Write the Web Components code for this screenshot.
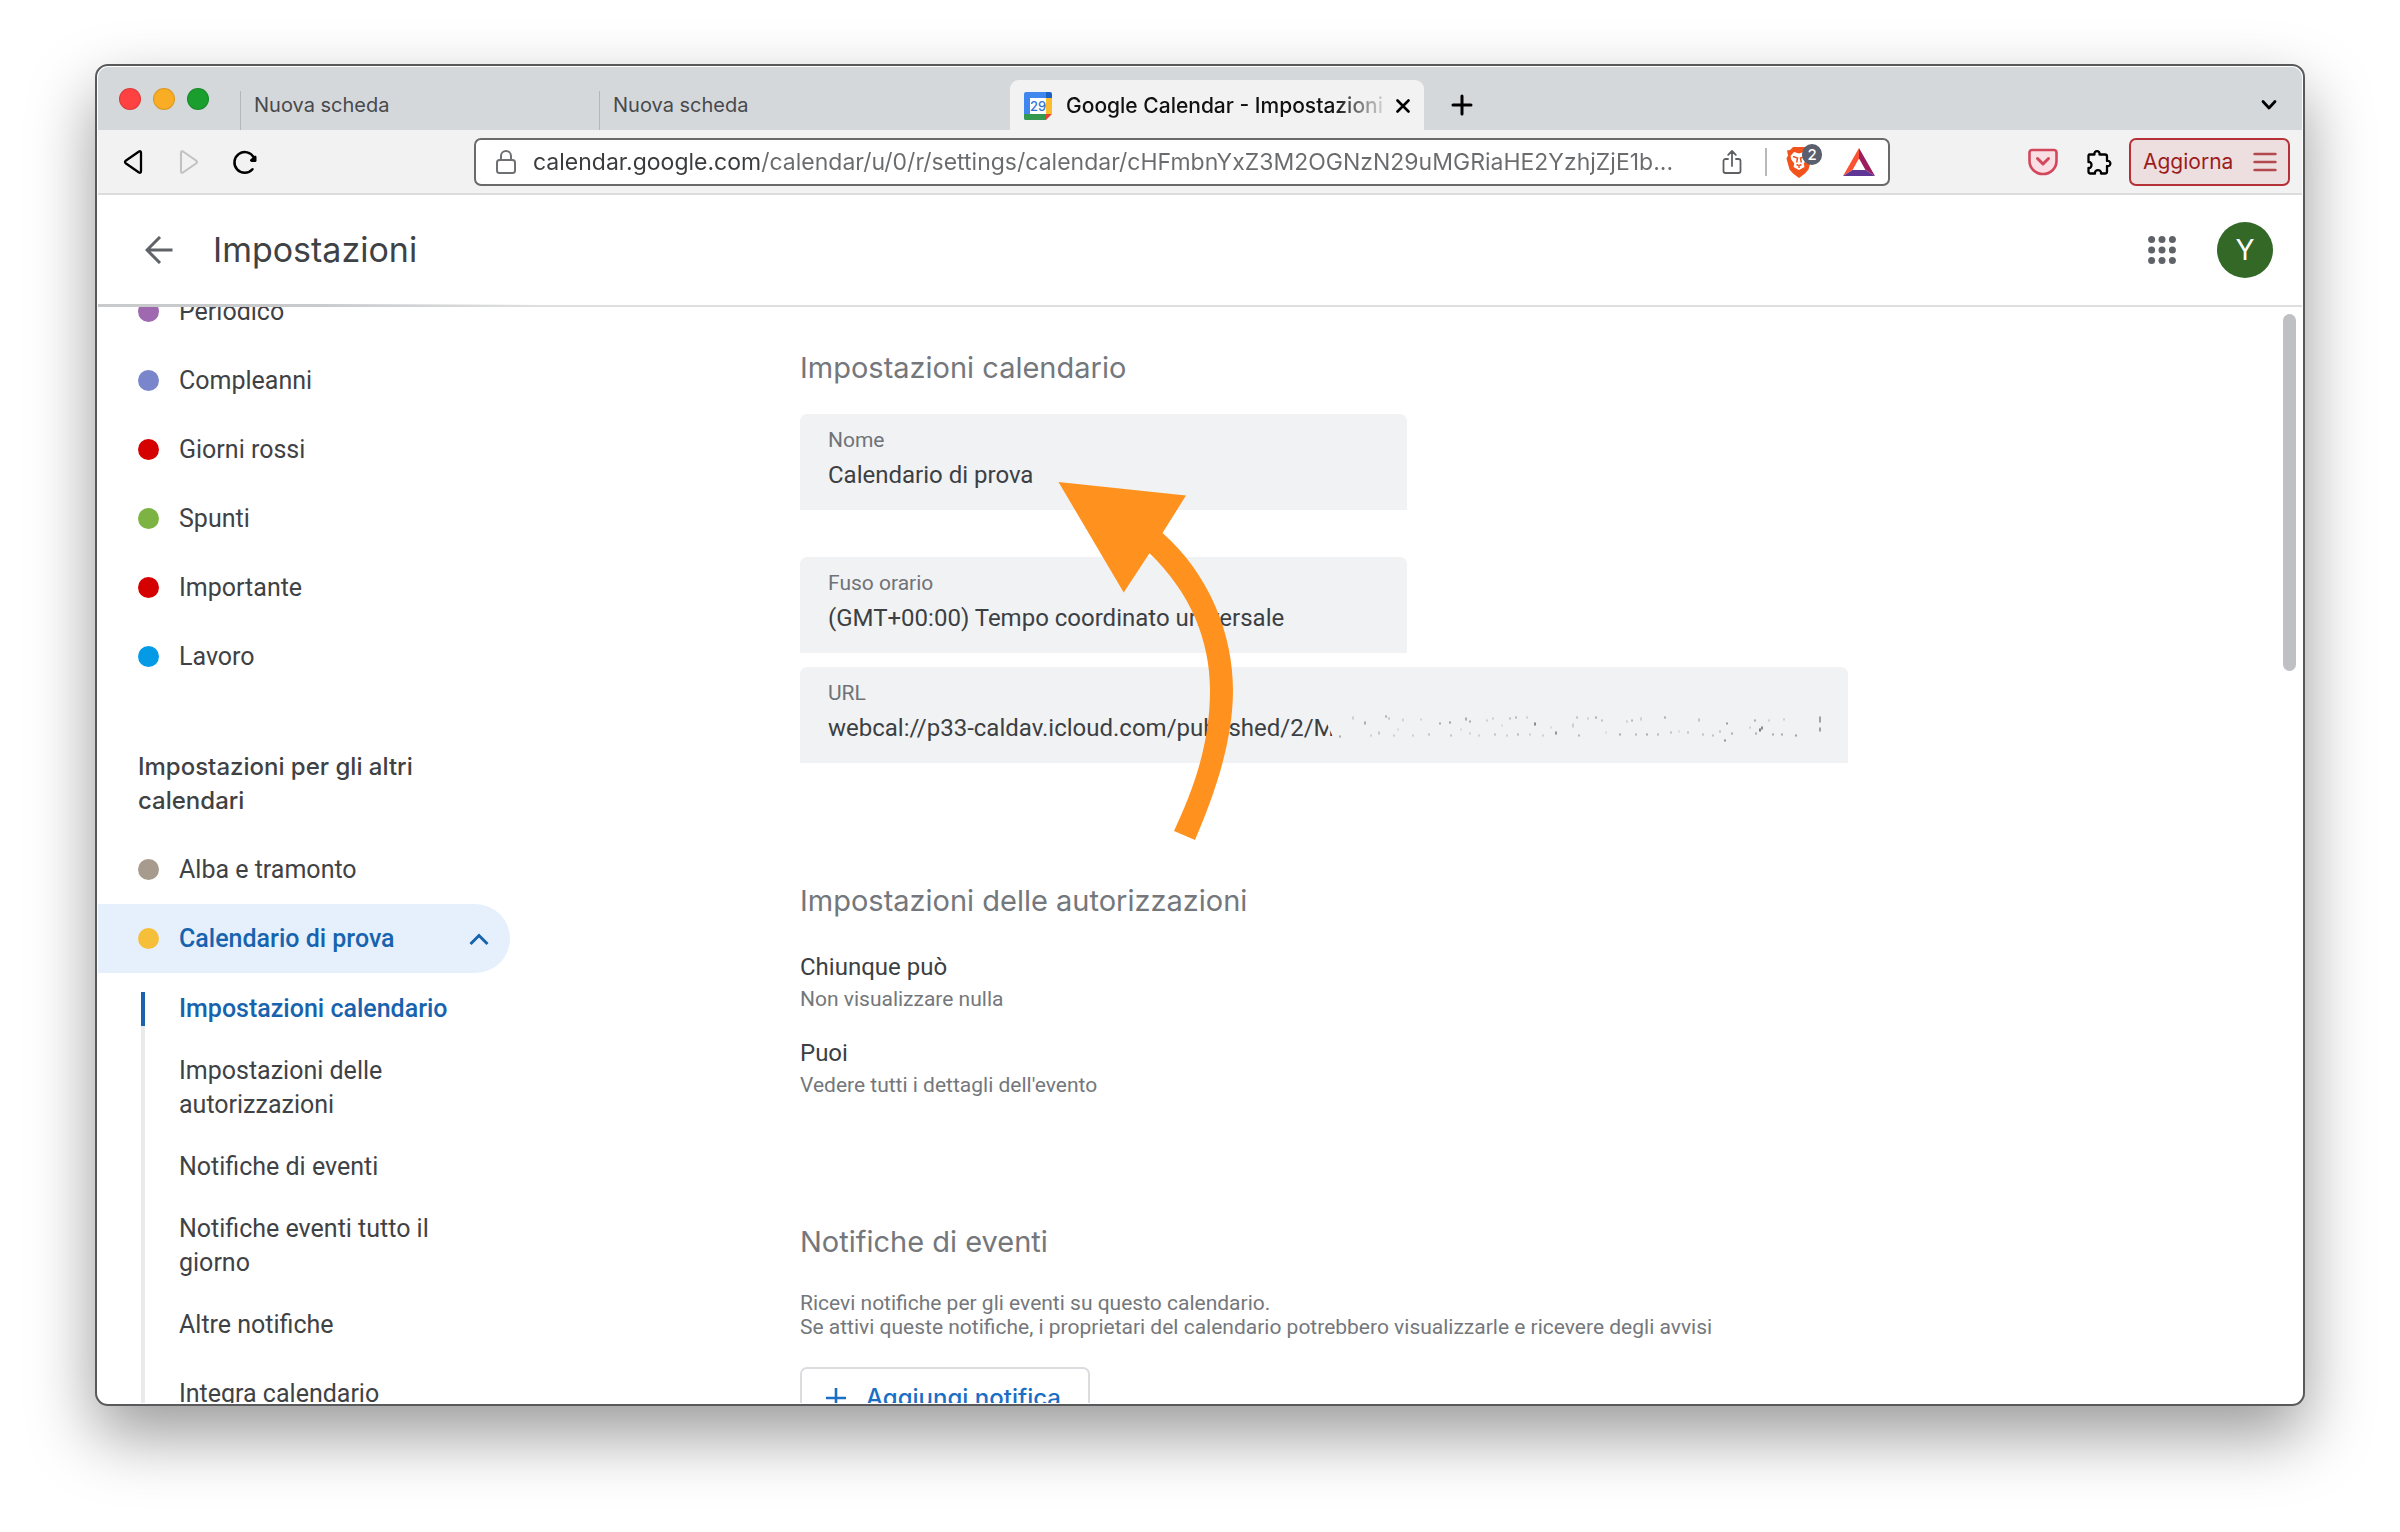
<!DOCTYPE html>
<html lang="it">
<head>
<meta charset="utf-8">
<title>Google Calendar - Impostazioni</title>
<style>
  body { margin: 0; background: #fff; font-family: Roboto, "Liberation Sans", sans-serif; color: #3c4043; }
</style>
</head>
<body>
<calendar-screen></calendar-screen>
<script>
const define = (name, html, setup) => {
  const template = document.createElement('template');
  template.innerHTML = '<style>*{box-sizing:border-box}button{font:inherit;color:inherit;background:none;border:0;padding:0;margin:0}a{color:inherit;text-decoration:none}svg{display:block;flex:none}</style>' + html;
  customElements.define(name, class extends HTMLElement {
    constructor() {
      super();
      this.attachShadow({ mode: 'open' }).append(template.content.cloneNode(true));
    }
    connectedCallback() { if (setup) setup(this, this.shadowRoot); }
  });
};

define('browser-tab', `
<style>
  :host { display: flex; flex: 0 1 359px; min-width: 0; height: 50px; align-items: center; font: 400 20px/28px Inter, sans-serif; color: #47494c; }
  .rule { width: 1px; height: 39px; align-self: flex-end; background: #b4b7ba; margin-right: 13px; }
  button { overflow: hidden; white-space: nowrap; }
</style>
<span class="rule"></span><button type="button"><slot></slot></button>`);

define('active-tab', `
<style>
  :host { display: flex; flex: 0 1 414px; min-width: 0; height: 50px; align-items: center; padding: 2px 14px 0; gap: 14px; background: #f2f2f2; border-radius: 9px 9px 0 0; font: 500 21px/28px Inter, sans-serif; color: #111; }
  .title { flex: 1; min-width: 0; overflow: hidden; white-space: nowrap; text-align: left; -webkit-mask-image: linear-gradient(to right, #000 85%, rgba(0,0,0,.15)); mask-image: linear-gradient(to right, #000 85%, rgba(0,0,0,.15)); }
</style>
<svg width="28" height="28" viewBox="0 0 28 28">
  <path d="M2 0h20v6H6v22H2a2 2 0 0 1-2-2V2a2 2 0 0 1 2-2z" fill="#3f86ee"/>
  <path d="M22 0h4a2 2 0 0 1 2 2v4h-6z" fill="#1b62c4"/>
  <path d="M22 6h6v16h-6z" fill="#fbbc2c"/>
  <path d="M0 22h22v6H2a2 2 0 0 1-2-2z" fill="#34984e"/>
  <path d="M22 22h6l-6 6z" fill="#e5432f"/>
  <path d="M6 6h16v16H6z" fill="#fff"/>
  <text x="14" y="19" text-anchor="middle" font-family="Inter, sans-serif" font-size="13" font-weight="500" fill="#2f75d6">29</text>
</svg>
<button class="title" type="button"><slot></slot></button>
<button type="button" aria-label="Chiudi scheda"><svg width="14" height="14" viewBox="0 0 14 14" fill="none" stroke="#000" stroke-width="2.6" stroke-linecap="round"><path d="M1.5 1.5l11 11M12.5 1.5l-11 11"/></svg></button>`);

define('tab-strip', `
<style>
  :host { display: flex; height: 63px; align-items: flex-end; background: #d5d8db; }
  .lights { display: flex; gap: 13px; padding: 0 32px 0 21px; align-self: center; }
  .lights i { width: 22px; height: 22px; border-radius: 50%; border: 1px solid rgba(0,0,0,.12); margin-right: -1px; }
  button { height: 50px; display: flex; align-items: center; }
  .plus { padding: 0 27px; }
  .more { margin-left: auto; padding-right: 25px; }
</style>
<span class="lights"><i style="background:#fe4141"></i><i style="background:#f9ad24"></i><i style="background:#1a9e2e"></i></span>
<browser-tab>Nuova scheda</browser-tab>
<browser-tab style="flex-basis:411px">Nuova scheda</browser-tab>
<active-tab>Google Calendar - Impostazioni</active-tab>
<button class="plus" type="button" aria-label="Nuova scheda"><svg width="22" height="22" viewBox="0 0 22 22" stroke="#000" stroke-width="3" stroke-linecap="round"><path d="M11 2v18M2 11h18"/></svg></button>
<button class="more" type="button" aria-label="Cerca schede"><svg width="16" height="12" viewBox="0 0 16 12" fill="none" stroke="#000" stroke-width="2.8" stroke-linecap="round" stroke-linejoin="round"><path d="M2 2.5l6 6.5 6-6.5"/></svg></button>`);

define('address-bar', `
<style>
  :host { display: flex; flex: 1; min-width: 0; height: 48px; align-items: center; border: 2px solid #6a6a6c; border-radius: 7px; background: #fff; padding: 0 13px 0 19px; }
  input { flex: 1; min-width: 0; margin: 0 8px 0 16px; padding: 0; border: 0; outline: 0; height: 40px; font: 400 23px/40px Inter, sans-serif; color: #6a6b6d;
    background: linear-gradient(to right, #3a3b3d 229px, #6a6b6d 229px); -webkit-background-clip: text; background-clip: text; -webkit-text-fill-color: transparent; text-overflow: ellipsis; }
  .rule { width: 2px; height: 28px; background: #b9b9bc; margin: 0 18px 0 23px; }
  .shield { position: relative; margin-right: 30px; }
  .badge { position: absolute; left: 17px; top: -2px; width: 20px; height: 21px; border-radius: 10px; background: #5b5e6d; color: #fff; font: 500 15px/21px Inter, sans-serif; text-align: center; }
</style>
<svg width="22" height="24" viewBox="0 0 22 24" fill="none" stroke="#6e7073" stroke-width="2"><rect x="2" y="10" width="18" height="13" rx="2.5"/><path d="M6 10V6a5 5 0 0 1 10 0v4"/></svg>
<input type="text" aria-label="Indirizzo" value="calendar.google.com/calendar/u/0/r/settings/calendar/cHFmbnYxZ3M2OGNzN29uMGRiaHE2YzhjZjE1b...">
<button type="button" aria-label="Condividi"><svg width="20" height="26" viewBox="0 0 20 26" fill="none" stroke="#5f6063" stroke-width="1.8" stroke-linecap="round" stroke-linejoin="round"><path d="M6 10H3.500a2 2 0 0 0-2 2v10a2 2 0 0 0 2 2h13a2 2 0 0 0 2-2V12a2 2 0 0 0-2-2H14M10 17V2M6.200 5.800L10 2l3.800 3.800"/></svg></button>
<span class="rule"></span>
<button class="shield" type="button" aria-label="Brave Shields">
  <svg width="28" height="32" viewBox="0 0 28 32"><path d="M8 1h12l3 3 3 .5-1 5 1.500 3-3 11-3.500 4L14 32l-6-4.500-3.500-4-3-11L3 9.500 2 4.500 5 4z" fill="#f2531d"/><path d="M14 7.500l5-1.500 3.500 4-.8 3.500-3 4 .8 3.500L14 24l-5.500-3 .8-3.500-3-4L5.500 10 9 6z" fill="#fff"/><path d="M8 10.500l4.500 1.500-.8 4.500M20 10.500l-4.500 1.500.8 4.500M11.500 18.500l2.500 1.200 2.500-1.200M14 19.500V22" stroke="#f2531d" stroke-width="1.500" fill="none"/></svg>
  <span class="badge">2</span>
</button>
<svg width="32" height="28" viewBox="0 0 32 28"><path d="M16 0L0 28l9.500-6L16 10.500z" fill="#fb5231"/><path d="M16 0l16 28-9.500-6L16 10.500z" fill="#9b1f5e"/><path d="M0 28h32l-9.500-6h-13z" fill="#5f3596"/></svg>`);

define('browser-toolbar', `
<style>
  :host { display: flex; height: 65px; align-items: center; padding: 0 12px 0 7px; background: #f2f2f2; border-bottom: 2px solid #dcdcdd; }
  .tool { width: 56px; height: 48px; flex: none; display: flex; align-items: center; justify-content: center; }
  address-bar { margin: 0 125px 0 201px; }
  .update { display: flex; align-items: center; justify-content: space-between; width: 161px; height: 48px; margin-left: 2px; padding: 0 11px 0 12px; border: 2px solid #b53137; border-radius: 7px; background: #eddfe0; color: #9d1c20; font: 400 21px/28px Inter, sans-serif; }
</style>
<button class="tool" type="button" aria-label="Indietro"><svg width="20" height="26" viewBox="0 0 20 26" fill="none" stroke="#000" stroke-width="2.3" stroke-linejoin="round"><path d="M16 2.500Q18 1.500 18 4v18q0 2.500-2 1.500L3 14.500q-2-1.500 0-3z"/></svg></button>
<button class="tool" type="button" aria-label="Avanti"><svg width="20" height="26" viewBox="0 0 20 26" fill="none" stroke="#c2c2c4" stroke-width="2.100" stroke-linejoin="round"><path d="M4 2.500Q2 1.500 2 4v18q0 2.500 2 1.500l13-9q2-1.500 0-3z"/></svg></button>
<button class="tool" type="button" aria-label="Ricarica"><svg width="26" height="26" viewBox="0 0 26 26" fill="none"><path d="M20.500 20.200A10.300 10.300 0 1 1 21.800 8.500" stroke="#000" stroke-width="2.500" stroke-linecap="round"/><path d="M23 6.500a1.500 1.500 0 0 1 1.500 1.500v3.500a1.500 1.500 0 0 1-1.500 1.500h-3.500q-2.500-.8-1-2.700z" fill="#000"/></svg></button>
<address-bar></address-bar>
<button class="tool" type="button" aria-label="Pocket"><svg width="30" height="28" viewBox="0 0 30 28" fill="#f9dfe3" stroke="#d3475c" stroke-width="2.600" stroke-linejoin="round" stroke-linecap="round"><path d="M4 2h22a2.500 2.500 0 0 1 2.500 2.500V13a13.500 13 0 0 1-27 0V4.500A2.500 2.500 0 0 1 4 2z"/><path d="M9.500 10.500l5.500 5.500 5.500-5.500" fill="none" stroke-width="3"/></svg></button>
<button class="tool" type="button" aria-label="Estensioni"><svg width="28" height="28" viewBox="0 0 28 28" fill="none" stroke="#000" stroke-width="2.300" stroke-linejoin="round"><path d="M4 6.500h5.500C8.500 2 15.500 2 14.500 6.500H20a2 2 0 0 1 2 2V13c4.500-1 4.500 6 0 5v5.500a2 2 0 0 1-2 2h-4c.8-4.500-6.800-4.500-6 0H5.500a2 2 0 0 1-2-2V20c4 .5 4-6.500 0-6V8.500a2 2 0 0 1 .5-2z"/></svg></button>
<button class="update" type="button">Aggiorna<svg width="24" height="20" viewBox="0 0 24 20" stroke="#b5484c" stroke-width="2.400" stroke-linecap="round"><path d="M1.500 2h21M1.500 10h21M1.500 18h21"/></svg></button>`);

define('app-header', `
<style>
  :host { display: flex; height: 112px; align-items: center; padding: 0 29px 2px 47px; background: linear-gradient(to right, #c9cacc 0, #c9cacc 220px, rgba(220,220,222,0) 440px) left bottom / 100% 3px no-repeat, linear-gradient(#dedfe0, #dedfe0) left bottom / 100% 2px no-repeat, #fff; }
  h1 { flex: 1; margin: 0 0 0 40px; font: 400 34px/44px Inter, sans-serif; color: #3f4245; }
  .apps { margin-right: 41px; }
  .avatar { width: 56px; height: 56px; border-radius: 50%; background: #336827; color: #fff; font: 400 28px/56px Inter, sans-serif; text-align: center; }
</style>
<button type="button" aria-label="Indietro"><svg width="28" height="28" viewBox="0 0 28 28" fill="none" stroke="#5f6368" stroke-width="3"><path d="M27.500 14H2M15 1L2 14l13 13"/></svg></button>
<h1><slot></slot></h1>
<button class="apps" type="button" aria-label="App Google"><svg width="28" height="28" viewBox="0 0 28 28" fill="#5f6368"><circle cx="3.600" cy="3.600" r="3.500"/><circle cx="14" cy="3.600" r="3.500"/><circle cx="24.400" cy="3.600" r="3.500"/><circle cx="3.600" cy="14" r="3.500"/><circle cx="14" cy="14" r="3.500"/><circle cx="24.400" cy="14" r="3.500"/><circle cx="3.600" cy="24.400" r="3.500"/><circle cx="14" cy="24.400" r="3.500"/><circle cx="24.400" cy="24.400" r="3.500"/></svg></button>
<button class="avatar" type="button">Y</button>`);

define('calendar-row', `
<style>
  :host { display: block; }
  a { display: flex; align-items: center; height: 69px; padding: 0 21px 0 40px; font-size: 25px; line-height: 34px; }
  .dot { width: 21px; height: 21px; border-radius: 50%; margin-right: 20px; flex: none; background: var(--dot); }
  svg { display: none; margin-left: auto; }
  :host([open]) a { background: #e6f0fd; border-radius: 0 35px 35px 0; color: #1863ae; font-weight: 500; }
  :host([open]) svg { display: block; }
</style>
<a href="#"><span class="dot"></span><slot></slot><svg width="20" height="14" viewBox="0 0 20 14" fill="none" stroke="#1863ae" stroke-width="3"><path d="M1.500 12L10 3.500l8.500 8.500"/></svg></a>`,
(host, root) => root.querySelector('.dot').style.setProperty('--dot', host.getAttribute('color')));

define('side-link', `
<style>
  :host { display: flex; padding: 14px 0; font-size: 25px; line-height: 34px; }
  a { flex: 0 1 320px; padding: 0 0 0 34px; border-left: 4px solid transparent; }
  :host([current]) a { border-color: #1863ae; color: #1863ae; font-weight: 500; }
</style>
<a href="#"><slot></slot></a>`);

define('settings-sidebar', `
<style>
  :host { display: block; flex: 0 0 412px; overflow: hidden; color: #3f4245; }
  nav { margin-top: -30px; }
  h2 { margin: 59px 60px 17px 40px; font: 500 24px/34px Inter, sans-serif; }
  .sub { margin: 5px 0 0 43px; padding-bottom: 40px; background: linear-gradient(#e8eaed, #e8eaed) left 14px / 4px 100% no-repeat; }
  .last { margin-top: 7px; }
</style>
<nav>
  <calendar-row color="#9e69af">Periodico</calendar-row>
  <calendar-row color="#7986cb">Compleanni</calendar-row>
  <calendar-row color="#d50000">Giorni rossi</calendar-row>
  <calendar-row color="#7cb342">Spunti</calendar-row>
  <calendar-row color="#d50000">Importante</calendar-row>
  <calendar-row color="#039be5">Lavoro</calendar-row>
  <h2>Impostazioni per gli altri calendari</h2>
  <calendar-row color="#a79b8e">Alba e tramonto</calendar-row>
  <calendar-row color="#f6bf3a" open>Calendario di prova</calendar-row>
  <div class="sub">
    <side-link current>Impostazioni calendario</side-link>
    <side-link>Impostazioni delle autorizzazioni</side-link>
    <side-link>Notifiche di eventi</side-link>
    <side-link>Notifiche eventi tutto il giorno</side-link>
    <side-link>Altre notifiche</side-link>
    <side-link class="last">Integra calendario</side-link>
  </div>
</nav>`);

define('setting-field', `
<style>
  :host { display: block; position: relative; box-sizing: border-box; max-width: 607px; height: 96px; padding: 12px 28px 0; border-radius: 7px 7px 0 0; background: #f1f2f4; }
  :host([wide]) { max-width: 1048px; }
  label { display: block; font-size: 21px; line-height: 28px; color: #6f7378; height: 33px; }
  input { display: block; width: 100%; height: 32px; border: 0; padding: 0; margin: 0; outline: 0; background: none; font: 400 24px/32px Roboto, sans-serif; color: #3c4043; }
</style>
<label for="value"></label><input id="value" type="text" readonly><slot></slot>`,
(host, root) => {
  root.querySelector('label').textContent = host.getAttribute('label');
  root.querySelector('input').value = host.getAttribute('value');
});

define('redaction-marks', `
<style>:host { position: absolute; right: 24px; top: 36px; }</style>
<svg width="507" height="44" viewBox="-12 0 507 44"><path d="M-6 0V12L4 34V44H495V0z" fill="#f1f2f4"/><g id="marks" fill="none" stroke="#3c4043" stroke-width="1.5" stroke-linecap="round"></g></svg>`,
(host, root) => {
  /* x, y, length, opacity of each leftover fleck */
  const flecks = [[11,33,2,.6],[24,14,4,.3],[36,19,4,.6],[42,32,2,.3],[50,29,4,.35],[57,13,2,.6],[60,15,2,.4],[65,32,2,.3],[69,26,3,.2],[74,16,4,.25],[84,32,3,.3],[92,16,2,.25],[100,31,3,.4],[111,20,3,.6],[121,19,3,.7],[122,32,2,.4],[132,26,3,.2],[137,15,4,.6],[141,18,3,.6],[141,30,3,.3],[150,32,2,.3],[158,17,2,.3],[164,15,3,.3],[166,31,3,.4],[173,22,2,.2],[178,32,2,.3],[181,15,3,.4],[187,14,3,.5],[189,31,3,.5],[198,14,2,.3],[201,31,3,.3],[206,20,4,.9],[214,32,2,.3],[222,24,2,.2],[227,29,4,.8],[244,21,5,.3],[248,14,2,.4],[250,32,3,.5],[259,15,2,.3],[267,14,3,.6],[273,17,2,.4],[277,29,3,.2],[291,31,3,.6],[298,18,3,.3],[303,17,3,.5],[307,31,3,.5],[312,15,4,.3],[318,31,3,.6],[329,31,3,.5],[336,14,3,.6],[342,29,3,.4],[350,28,2,.2],[359,29,2,.4],[370,16,4,.4],[374,31,3,.4],[384,32,2,.4],[391,28,3,.4],[398,20,3,.7],[396,37,3,.8],[403,30,3,.6],[421,24,3,.3],[426,17,3,.6],[427,30,3,.6],[431,26,4,1],[433,24,4,.9],[440,17,3,.3],[444,31,3,.6],[453,31,3,.6],[455,16,3,.3],[467,32,3,.7],[491,14,7,.7],[491,25,5,.7]];
  root.querySelector('#marks').innerHTML = flecks.map(([x, y, l, o]) => `<path d="M${x} ${y}v${Math.max(1, l - 2)}" opacity="${o * .85}"/>`).join('');
});

define('settings-section', `
<style>
  :host { display: flex; flex-direction: column; }
  h2 { margin: 0 0 26px; font: 400 29px/40px Inter, sans-serif; color: #74777b; }
</style>
<h2></h2><slot></slot>`,
(host, root) => { root.querySelector('h2').textContent = host.getAttribute('heading'); });

define('permission-entry', `
<style>
  :host { display: flex; flex-direction: column; gap: 2px; padding: 4px 0 20px; }
  p { margin: 0; font-size: 24px; line-height: 32px; color: #3c4043; }
  .note { font-size: 21px; line-height: 28px; color: #74777b; }
</style>
<p><slot></slot></p><p class="note"><slot name="note"></slot></p>`);

define('pointer-arrow', `
<style>:host { position: absolute; left: 258px; top: 174px; pointer-events: none; }</style>
<svg width="177" height="360" viewBox="1058 481 177 360"><path d="M1058.500 482L1186 495.500 1162.500 533C1210 575 1233 635 1233 690C1233 745 1212 800 1195 840L1174 831C1193 790 1210 745 1210 690C1210 640 1190 592 1149.500 553.300L1123.700 592.500z" fill="#ff921e"/></svg>`);

define('settings-main', `
<style>
  :host { display: flex; flex: 1; min-width: 0; overflow: hidden; padding: 0 6px 0 290px; }
  main { position: relative; flex: 1; min-width: 0; padding-top: 41px; }
  .fields { margin-bottom: 118px; }
  .fields setting-field { margin-bottom: 47px; }
  .fields setting-field.close { margin-bottom: 14px; }
  .fields setting-field.end { margin-bottom: 0; }
  .perms { margin-bottom: 103px; }
  .desc { margin: 3px 0 28px; font-size: 21px; line-height: 24px; color: #74777b; }
  .add { align-self: flex-start; display: flex; align-items: center; gap: 20px; height: 62px; padding: 0 27px 0 24px; border: 2px solid #dadce0; border-radius: 7px; font: 500 24px/32px Inter, sans-serif; color: #1a6fc4; }
  .scroll { flex: none; width: 13px; height: 357px; margin-top: 7px; border-radius: 7px; background: #bfc0c4; }
</style>
<main>
  <settings-section class="fields" heading="Impostazioni calendario">
    <setting-field label="Nome" value="Calendario di prova"></setting-field>
    <setting-field class="close" label="Fuso orario" value="(GMT+00:00) Tempo coordinato universale"></setting-field>
    <setting-field class="end" wide label="URL" value="webcal://p33-caldav.icloud.com/published/2/M"><redaction-marks></redaction-marks></setting-field>
  </settings-section>
  <settings-section class="perms" heading="Impostazioni delle autorizzazioni">
    <permission-entry>Chiunque può<span slot="note">Non visualizzare nulla</span></permission-entry>
    <permission-entry>Puoi<span slot="note">Vedere tutti i dettagli dell'evento</span></permission-entry>
  </settings-section>
  <settings-section heading="Notifiche di eventi">
    <p class="desc">Ricevi notifiche per gli eventi su questo calendario.<br>Se attivi queste notifiche, i proprietari del calendario potrebbero visualizzarle e ricevere degli avvisi</p>
    <button class="add" type="button"><svg width="20" height="20" viewBox="0 0 20 20" stroke="#1a6fc4" stroke-width="2.600"><path d="M10 0v20M0 10h20"/></svg>Aggiungi notifica</button>
  </settings-section>
  <pointer-arrow></pointer-arrow>
</main>
<span class="scroll"></span>`);

define('calendar-screen', `
<style>
  :host { display: flex; height: 100vh; box-sizing: border-box; padding: 64px 95px 126px; overflow: hidden; }
  .window { flex: 1; min-width: 0; display: flex; flex-direction: column; padding: 1px; border: 2px solid #58595b; border-radius: 13px; overflow: hidden; background: #fff; box-shadow: 0 29px 66px rgba(0,0,0,.4); }
  tab-strip { border-radius: 10px 10px 0 0; }
  .content { flex: 1; min-height: 0; display: flex; overflow: hidden; }
</style>
<div class="window">
  <tab-strip></tab-strip>
  <browser-toolbar></browser-toolbar>
  <app-header>Impostazioni</app-header>
  <div class="content"><settings-sidebar></settings-sidebar><settings-main></settings-main></div>
</div>`);
</script>
</body>
</html>
